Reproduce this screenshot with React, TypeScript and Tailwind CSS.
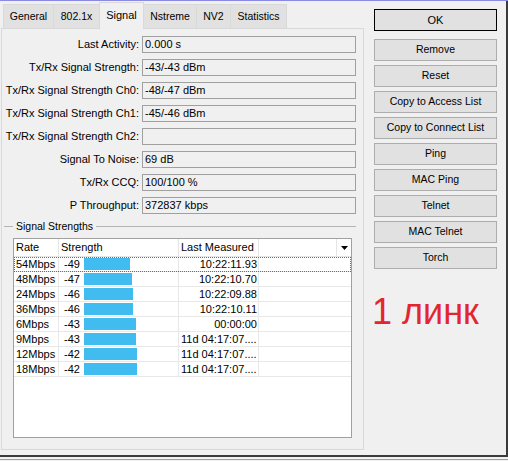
import React from "react";

const fields: [string, string][] = [
  ["Last Activity:", "0.000 s"],
  ["Tx/Rx Signal Strength:", "-43/-43 dBm"],
  ["Tx/Rx Signal Strength Ch0:", "-48/-47 dBm"],
  ["Tx/Rx Signal Strength Ch1:", "-45/-46 dBm"],
  ["Tx/Rx Signal Strength Ch2:", ""],
  ["Signal To Noise:", "69 dB"],
  ["Tx/Rx CCQ:", "100/100 %"],
  ["P Throughput:", "372837 kbps"],
];

const rows: { rate: string; s: number; t: string; right: boolean }[] = [
  { rate: "54Mbps", s: -49, t: "10:22:11.93", right: true },
  { rate: "48Mbps", s: -47, t: "10:22:10.70", right: true },
  { rate: "24Mbps", s: -46, t: "10:22:09.88", right: true },
  { rate: "36Mbps", s: -46, t: "10:22:10.11", right: true },
  { rate: "6Mbps", s: -43, t: "00:00:00", right: true },
  { rate: "9Mbps", s: -43, t: "11d 04:17:07....", right: false },
  { rate: "12Mbps", s: -42, t: "11d 04:17:07....", right: false },
  { rate: "18Mbps", s: -42, t: "11d 04:17:07....", right: false },
];

const tabs: { name: string; w: string; sel?: boolean }[] = [
  { name: "General", w: "w-[51px]" },
  { name: "802.1x", w: "w-[47px]" },
  { name: "Signal", w: "w-[45px]", sel: true },
  { name: "Nstreme", w: "w-[54px]" },
  { name: "NV2", w: "w-[35px]" },
  { name: "Statistics", w: "w-[57px]" },
];

const buttons = [
  "Remove",
  "Reset",
  "Copy to Access List",
  "Copy to Connect List",
  "Ping",
  "MAC Ping",
  "Telnet",
  "MAC Telnet",
  "Torch",
];

export default function App() {
  return (
    <div className="w-[508px] h-[461px] bg-[#f0f0f0] overflow-hidden flex flex-col font-['Liberation_Sans',Arial,sans-serif] text-black text-[11px]">
      <div className="h-px shrink-0 bg-[#8a8ae2]" />
      <div className="flex h-[454px] w-[508px] shrink-0 border-r-2 border-[#3a3a3a]">
        {/* left: tab control */}
        <div className="w-[364px] flex flex-col shrink-0">
          <div className="h-[27px] flex items-end pl-[3px] shrink-0">
            {tabs.map((t, i) =>
              t.sel ? (
                <div
                  key={t.name}
                  className={`${t.w} h-[27px] -mb-px -ml-px relative z-10 flex items-center justify-center border border-b-0 border-[#d9d9d9] bg-[#f0f0f0] text-[11px] pb-[2px]`}
                >
                  {t.name}
                </div>
              ) : (
                <div
                  key={t.name}
                  className={`${t.w} h-[24px] ${i === 0 ? "" : "-ml-px"} flex items-center justify-center border border-b-0 border-[#d9d9d9] bg-[#e1e1e1] text-[10.5px] pt-px`}
                >
                  {t.name}
                </div>
              )
            )}
          </div>
          <div className="ml-px w-[363px] h-[422px] border border-[#d9d9d9] bg-[#f0f0f0] pt-[7px] flex flex-col">
            <div className="flex flex-col gap-[6px]">
              {fields.map(([l, v]) => (
                <div key={l} className="flex items-center h-[17px]">
                  <div className="w-[137px] text-right whitespace-nowrap">{l}</div>
                  <div className="ml-[3px] w-[214px] h-[17px] border border-[#a0a0a0] bg-[#f0f0f0] pl-[2px] leading-[15px] whitespace-nowrap">
                    {v}
                  </div>
                </div>
              ))}
            </div>
            {/* group */}
            <div className="mt-[6px] ml-[2px] w-[352px] h-[13px] flex items-center">
              <div className="w-[9px] h-px bg-[#b4b4b4]" />
              <div className="px-[3px] text-[10.5px] whitespace-nowrap leading-[13px]">Signal Strengths</div>
              <div className="flex-1 h-px bg-[#b4b4b4]" />
            </div>
            {/* table */}
            <div className="mt-[5px] ml-[11px] w-[339px] h-[200px] border border-[#a0a0a0] bg-white flex flex-col">
              <div className="h-[18px] flex border-b border-[#e5e5e5] shrink-0">
                <div className="w-[45px] border-r border-[#e5e5e5] pl-[2px] flex items-center">Rate</div>
                <div className="w-[120px] border-r border-[#e5e5e5] pl-[2px] flex items-center">Strength</div>
                <div className="w-[80px] border-r border-[#e5e5e5] pl-[2px] flex items-center whitespace-nowrap">Last Measured</div>
                <div className="flex-1 border-r border-[#e5e5e5]" />
                <div className="w-[14px] flex items-center justify-center">
                  <svg width="7" height="4" viewBox="0 0 7 4">
                    <polygon points="0,0 7,0 3.5,4" fill="#000" />
                  </svg>
                </div>
              </div>
              <div className="relative flex flex-col">
                {rows.map((r) => (
                  <div key={r.rate} className="h-[15px] flex border-b border-[#e8e8e8]">
                    <div className="w-[45px] border-r border-[#e8e8e8] pl-[2px] flex items-center">{r.rate}</div>
                    <div className="w-[120px] border-r border-[#e8e8e8] pl-[5px] flex items-center">
                      <span className="w-[20px]">{r.s}</span>
                      <div className="h-[12px] bg-[#41bcf0]" style={{ width: 95 + r.s }} />
                    </div>
                    <div
                      className={`w-[80px] border-r border-[#e8e8e8] flex items-center whitespace-nowrap ${
                        r.right ? "justify-end pr-px" : "pl-[2px]"
                      }`}
                    >
                      {r.t}
                    </div>
                    <div className="flex-1" />
                  </div>
                ))}
                <div className="absolute left-0 right-0 top-0 h-[15px] border border-dotted border-[#6e6e6e]" />
              </div>
            </div>
          </div>
        </div>
        {/* right: buttons */}
        <div className="ml-[10px] w-[123px] pt-[8px] flex flex-col shrink-0">
          <div className="h-[22px] border border-black bg-[#e1e1e1] flex items-center justify-center text-[11px]">
            OK
          </div>
          <div className="mt-[8px] flex flex-col gap-[4px]">
            {buttons.map((b) => (
              <div
                key={b}
                className="h-[22px] border border-[#adadad] bg-[#e1e1e1] flex items-center justify-center text-[10.5px] whitespace-nowrap"
              >
                {b}
              </div>
            ))}
          </div>
          <div className="mt-[25px] -ml-[2px] text-[36px] leading-none text-[#e3262d] whitespace-nowrap">
            1 линк
          </div>
        </div>
      </div>
      <div className="h-[2px] shrink-0 bg-[#3a3a3a]" />
      <div className="h-[2px] shrink-0 bg-[#f0f0f0]" />
      <div className="h-px shrink-0 bg-[#a0a0a0]" />
      <div className="flex-1 bg-[#f0f0f0]" />
    </div>
  );
}
